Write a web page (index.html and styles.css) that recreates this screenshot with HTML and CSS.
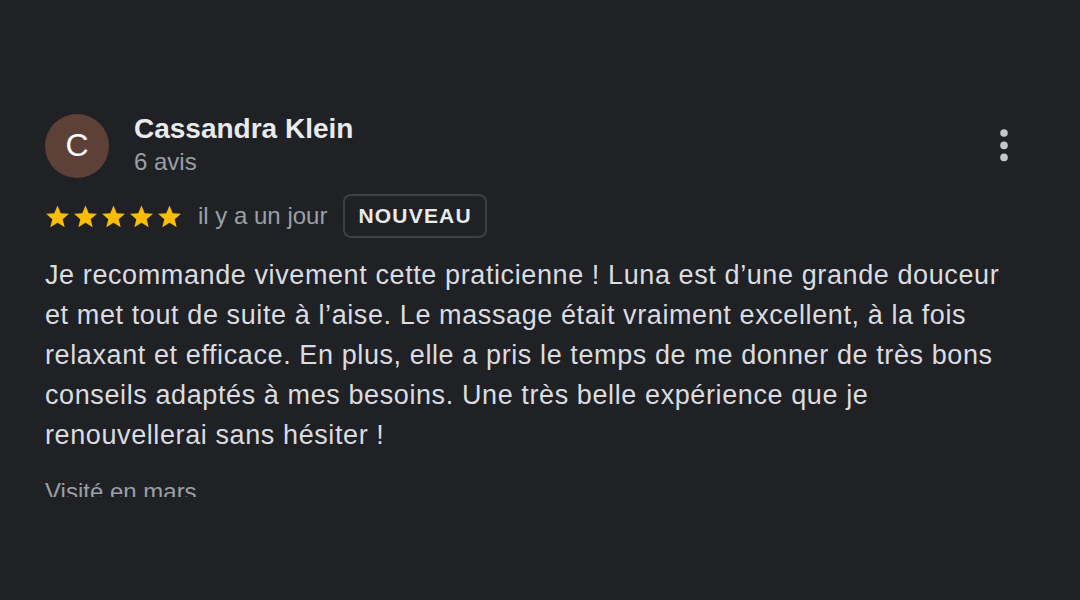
FILE: index.html
```html
<!DOCTYPE html>
<html lang="fr">
<head>
<meta charset="utf-8">
<title>Avis</title>
<link rel="stylesheet" href="styles.css">
</head>
<body>
<div class="review">
  <div class="header">
    <div class="avatar">C</div>
    <div class="who">
      <div class="name">Cassandra Klein</div>
      <div class="count">6 avis</div>
    </div>
    <button class="menu" aria-label="Plus d'options">
      <svg width="24" height="40" viewBox="0 0 24 40"><circle cx="12" cy="8" r="3.8"/><circle cx="12" cy="20.4" r="3.8"/><circle cx="12" cy="32.4" r="3.8"/></svg>
    </button>
  </div>
  <div class="meta">
    <div class="stars">
      <svg viewBox="0 0 24 24"><path d="M12 1.5l3.1 7.3 7.9.6-6 5.2 1.9 7.7L12 18.1l-6.9 4.2 1.9-7.7-6-5.2 7.9-.6z"/></svg>
      <svg viewBox="0 0 24 24"><path d="M12 1.5l3.1 7.3 7.9.6-6 5.2 1.9 7.7L12 18.1l-6.9 4.2 1.9-7.7-6-5.2 7.9-.6z"/></svg>
      <svg viewBox="0 0 24 24"><path d="M12 1.5l3.1 7.3 7.9.6-6 5.2 1.9 7.7L12 18.1l-6.9 4.2 1.9-7.7-6-5.2 7.9-.6z"/></svg>
      <svg viewBox="0 0 24 24"><path d="M12 1.5l3.1 7.3 7.9.6-6 5.2 1.9 7.7L12 18.1l-6.9 4.2 1.9-7.7-6-5.2 7.9-.6z"/></svg>
      <svg viewBox="0 0 24 24"><path d="M12 1.5l3.1 7.3 7.9.6-6 5.2 1.9 7.7L12 18.1l-6.9 4.2 1.9-7.7-6-5.2 7.9-.6z"/></svg>
    </div>
    <span class="date">il y a un jour</span>
    <span class="badge">NOUVEAU</span>
  </div>
  <p class="text">Je recommande vivement cette praticienne ! Luna est d’une grande douceur et met tout de suite à l’aise. Le massage était vraiment excellent, à la fois relaxant et efficace. En plus, elle a pris le temps de me donner de très bons conseils adaptés à mes besoins. Une très belle expérience que je renouvellerai sans hésiter !</p>
  <div class="visit">Visité en mars</div>
</div>
</body>
</html>
```

FILE: styles.css
```css
html, body {
  margin: 0;
  padding: 0;
  background: #202124;
  height: 100%;
}

body {
  font-family: "Liberation Sans", Arial, sans-serif;
  color: #e3e3e3;
}

.review {
  padding: 112px 64px 0 45px;
}

.header {
  display: flex;
  align-items: center;
}

.avatar {
  width: 64px;
  height: 64px;
  border-radius: 50%;
  background: #5d4037;
  color: #ffffff;
  font-size: 32px;
  display: flex;
  align-items: center;
  justify-content: center;
  flex: none;
  margin-right: 25px;
  margin-top: 1px;
}

.who {
  flex: 1;
}

.name {
  font-size: 28px;
  line-height: 34px;
  font-weight: bold;
  color: #e8eaed;
}

.count {
  font-size: 24px;
  line-height: 32px;
  color: #9aa0a6;
}

.menu {
  background: none;
  border: 0;
  padding: 0;
  width: 24px;
  height: 40px;
  display: flex;
  fill: #c4c7c5;
}

.meta {
  display: flex;
  align-items: center;
  margin-top: 16px;
}

.stars {
  display: flex;
  gap: 3px;
  fill: #fbbc04;
}

.stars svg {
  width: 25px;
  height: 25px;
  display: block;
}

.date {
  font-size: 24px;
  color: #9aa0a6;
  margin-left: 16px;
  margin-right: 16px;
}

.badge {
  border: 2px solid #3c4043;
  border-radius: 8px;
  padding: 0 13px;
  height: 40px;
  display: flex;
  align-items: center;
  font-size: 21px;
  font-weight: bold;
  letter-spacing: 1.2px;
  color: #e8eaed;
}

.text {
  margin: 17px 0 0 0;
  font-size: 27px;
  letter-spacing: 0.6px;
  line-height: 40px;
  color: #dadce0;
}

.visit {
  margin-top: 17px;
  font-size: 24px;
  line-height: 40px;
  height: 25px;
  overflow: hidden;
  color: #9aa0a6;
}
```
